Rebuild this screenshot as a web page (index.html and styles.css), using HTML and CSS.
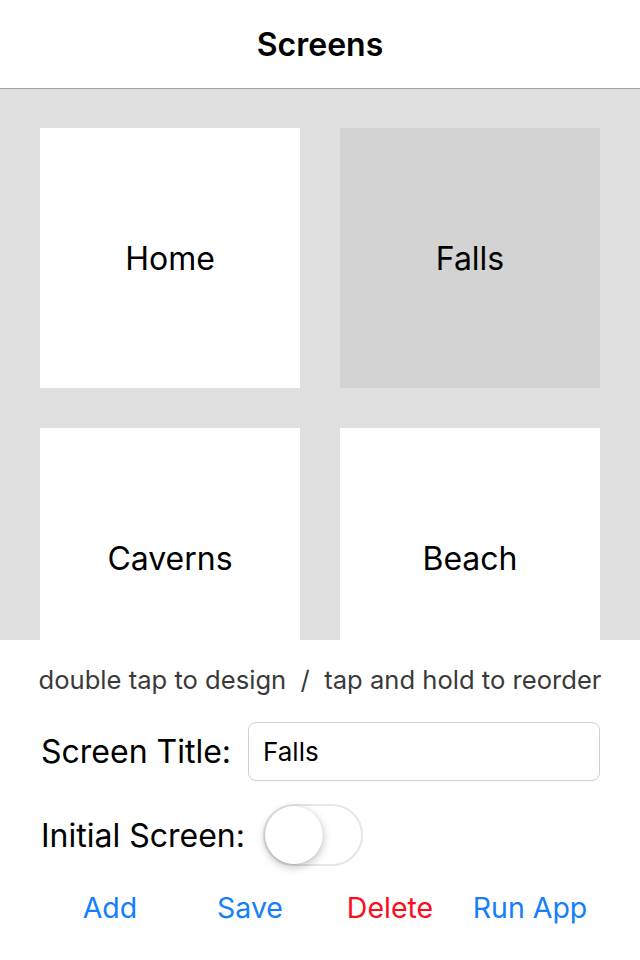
FILE: index.html
```html
<!DOCTYPE html>
<html>
<head>
<meta charset="utf-8">
<link rel="stylesheet" href="styles.css">
</head>
<body>
<div class="app">
  <header class="navbar"><h1 class="title">Screens</h1></header>
  <div class="grid-area">
    <div class="grid">
      <div class="tile">Home</div>
      <div class="tile selected">Falls</div>
      <div class="tile">Caverns</div>
      <div class="tile">Beach</div>
    </div>
  </div>
  <div class="panel">
    <p class="hint">double tap to design&nbsp; / &nbsp;tap and hold to reorder</p>
    <div class="row row-title">
      <label class="label">Screen Title:</label>
      <div class="input">Falls</div>
    </div>
    <div class="row row-initial">
      <span class="label">Initial Screen:</span>
      <div class="toggle"><div class="knob"></div></div>
    </div>
    <div class="actions">
      <span class="action">Add</span>
      <span class="action">Save</span>
      <span class="action danger">Delete</span>
      <span class="action">Run App</span>
    </div>
  </div>
</div>
</body>
</html>
```
FILE: styles.css
```css
* { box-sizing: border-box; }
html, body { margin: 0; padding: 0; }
body {
  width: 640px;
  height: 960px;
  overflow: hidden;
  font-family: Inter, "Liberation Sans", sans-serif;
  background: #fff;
  color: #000;
}
.app { display: flex; flex-direction: column; height: 960px; }
.navbar {
  height: 89px;
  border-bottom: 1px solid #a3a3a3;
  display: flex;
  align-items: center;
  justify-content: center;
}
.title {
  margin: 0;
  font-size: 32px;
  font-weight: 600;
  letter-spacing: 0;
}
.grid-area {
  height: 551px;
  background: #e0e0e0;
  overflow: hidden;
  padding: 39px 40px 0;
}
.grid {
  display: grid;
  grid-template-columns: 260px 260px;
  grid-auto-rows: 260px;
  column-gap: 40px;
  row-gap: 40px;
}
.tile {
  background: #fff;
  display: flex;
  align-items: center;
  justify-content: center;
  font-size: 32px;
}
.tile.selected { background: #d3d3d3; }
.panel { flex: 1; padding: 0 40px; }
.hint {
  margin: 23px -20px 0;
  text-align: center;
  font-size: 25.6px;
  color: #3a3a3a;
  white-space: nowrap;
  line-height: 34px;
}
.row { display: flex; align-items: center; }
.row-title { margin-top: 25px; height: 59px; }
.label { font-size: 32px; white-space: nowrap; padding-left: 1px; }
.input {
  margin-left: 17px;
  width: 352px;
  height: 59px;
  border: 1px solid #cfcfcf;
  border-radius: 8px;
  padding-left: 14px;
  display: flex;
  align-items: center;
  font-size: 26px;
}
.row-initial { margin-top: 22px; height: 64px; }
.toggle {
  margin-left: 18px;
  width: 100px;
  height: 62px;
  border: 2px solid #e6e6e6;
  border-radius: 31px;
  position: relative;
  background: #fff;
}
.knob {
  position: absolute;
  left: 0;
  top: 0;
  width: 58px;
  height: 58px;
  border-radius: 50%;
  background: #fff;
  box-shadow: 0 3px 8px rgba(0,0,0,0.25), 0 0 0 0.5px rgba(0,0,0,0.08);
}
.actions {
  display: grid;
  grid-template-columns: repeat(4, 140px);
  margin-top: 16px;
  height: 48px;
  align-items: center;
}
.action {
  text-align: center;
  font-size: 28.5px;
  color: #147efb;
}
.action.danger { color: #fc0d1b; }
```
